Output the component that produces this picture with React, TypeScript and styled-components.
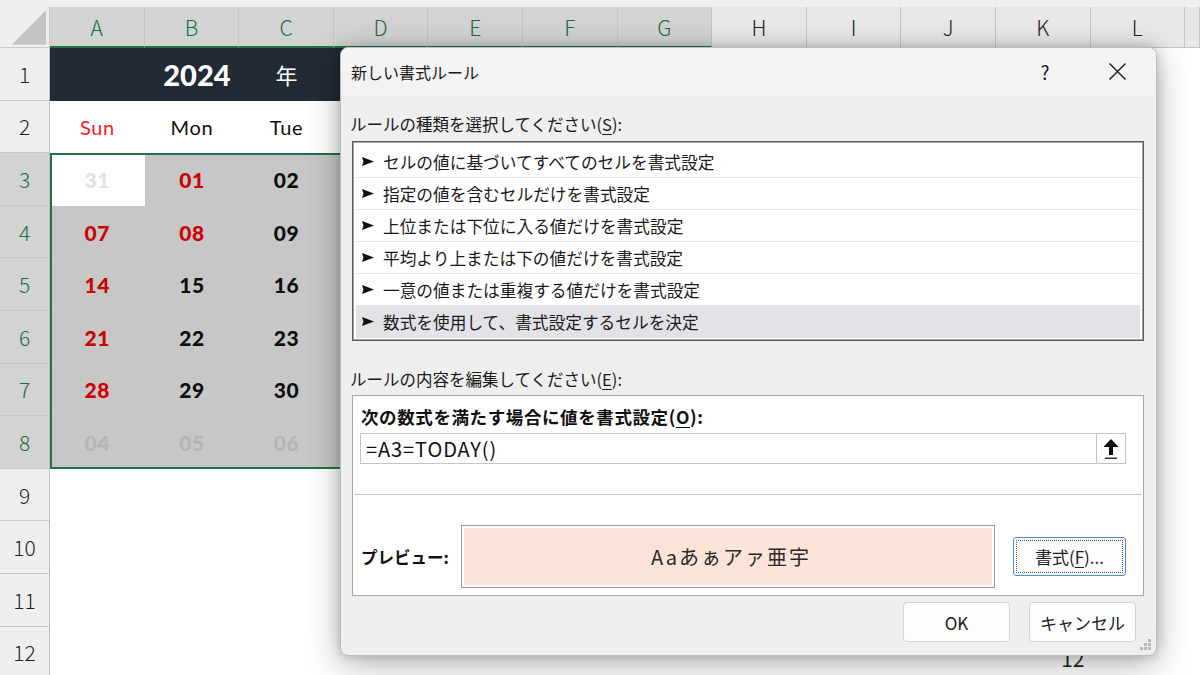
import React from "react";
import styled, { createGlobalStyle, css } from "styled-components";

const GlobalStyle = createGlobalStyle`
  html, body { margin: 0; padding: 0; }
  body {
    width: 1200px; height: 675px; overflow: hidden; background: #efefef;
    font-family: "Noto Sans CJK JP", "Noto Sans", sans-serif;
  }
  * { box-sizing: border-box; }
`;

const Screen = styled.div`
  position: relative;
  width: 1200px;
  height: 675px;
  overflow: hidden;
  background: #efefef;
  padding-top: 7px;
`;

const Sheet = styled.div`
  display: grid;
  grid-template-columns: 50px repeat(12, 94.6px) 1fr;
  grid-template-rows: 41px repeat(12, 52.6px);
  font-family: "Noto Sans CJK JP", sans-serif;
`;

type Pos = { $r: number; $c: number };
const place = css<Pos>`
  grid-row: ${(p) => p.$r};
  grid-column: ${(p) => p.$c};
`;

const Corner = styled.div<Pos>`
  ${place};
  background: #efefef;
  border-right: 1px solid #c8c8c8;
  border-bottom: 1px solid #c8c8c8;
  display: flex;
`;

const ColHead = styled.div<Pos & { $sel?: boolean }>`
  ${place};
  display: flex;
  align-items: center;
  justify-content: center;
  font-size: 21px;
  font-weight: 300;
  background: ${(p) => (p.$sel ? "#d3d3d3" : "#e8e8e8")};
  color: ${(p) => (p.$sel ? "#1c6b40" : "#1f1f1f")};
  border-right: 1px solid #c5c5c5;
  border-bottom: ${(p) => (p.$sel ? "2px solid #217346" : "1px solid #c5c5c5")};
`;

const RowHead = styled.div<Pos & { $sel?: boolean }>`
  ${place};
  display: flex;
  align-items: center;
  justify-content: center;
  font-size: 21px;
  font-weight: 300;
  background: ${(p) => (p.$sel ? "#d3d3d3" : "#efefef")};
  color: ${(p) => (p.$sel ? "#1c6b40" : "#1f1f1f")};
  border-right: 1px solid #c0c0c0;
  border-bottom: 1px solid #c6c6c6;
`;

type Fill = "plain" | "navy" | "sel" | "active";
const Cell = styled.div<Pos & { $fill: Fill; $align?: "center" | "end" }>`
  ${place};
  display: flex;
  align-items: center;
  justify-content: ${(p) => (p.$align === "end" ? "flex-end" : "center")};
  padding-right: ${(p) => (p.$align === "end" ? "6px" : "0")};
  padding-top: ${(p) => (p.$align === "end" ? "10px" : "0")};
  overflow: hidden;
  min-width: 0;
  background: ${(p) =>
    p.$fill === "navy" ? "#222a35" : p.$fill === "sel" ? "#c7c7c7" : "#ffffff"};
`;

const SelectionFrame = styled.div`
  grid-area: 4 / 2 / 10 / 9;
  border: 2px solid #217346;
  pointer-events: none;
  z-index: 1;
`;

const YearText = styled.span`
  font-family: "Lato", "Liberation Sans", sans-serif;
  font-weight: 900;
  font-size: 29px;
  color: #ffffff;
  padding-left: 10px;
`;

const YearUnit = styled.span`
  font-family: "Noto Sans CJK JP", sans-serif;
  font-size: 22px;
  color: #ffffff;
`;

type Tone = "red" | "sunred" | "black" | "dim" | "ghost";
const toneColor: Record<Tone, string> = {
  red: "#cc0000",
  sunred: "#ff1a1a",
  black: "#0d0d0d",
  dim: "#b4b4b4",
  ghost: "#e2e2e2",
};

const DayLabel = styled.span<{ $tone: Tone }>`
  font-family: "Lato", "Liberation Sans", sans-serif;
  font-size: 20px;
  letter-spacing: 0.6px;
  color: ${(p) => toneColor[p.$tone]};
`;

const DateNum = styled.span<{ $tone: Tone }>`
  font-family: "Lato", "Liberation Sans", sans-serif;
  font-weight: 900;
  font-size: 21px;
  letter-spacing: 0.5px;
  color: ${(p) => toneColor[p.$tone]};
`;

const PlainNum = styled.span`
  font-family: "Noto Sans CJK JP", sans-serif;
  font-size: 21px;
  color: #1f1f1f;
`;

/* ---------- Dialog ---------- */

const Dialog = styled.div`
  position: absolute;
  left: 340px;
  top: 47px;
  width: 817px;
  height: 609px;
  background: #efefef;
  border: 1px solid #bdbdbd;
  border-radius: 8px;
  box-shadow: 0 8px 34px rgba(0, 0, 0, 0.3), 0 0 12px rgba(0, 0, 0, 0.18);
  display: flex;
  flex-direction: column;
  overflow: hidden;
  z-index: 10;
  color: #1b1b1b;
  font-family: "Noto Sans CJK JP", "Noto Sans", sans-serif;
`;

const TitleBar = styled.div`
  height: 47px;
  flex: none;
  display: flex;
  align-items: center;
  background: #f3f3f3;
  padding-left: 10px;
`;

const Title = styled.div`
  flex: 1;
  font-size: 16px;
  color: #1a1a1a;
`;

const TitleButton = styled.div<{ $w: number }>`
  width: ${(p) => p.$w}px;
  height: 100%;
  display: flex;
  align-items: center;
  justify-content: center;
  font-size: 19px;
  color: #1a1a1a;
`;

const Body = styled.div`
  flex: 1;
  display: flex;
  flex-direction: column;
  padding: 0 12px 0 11px;
`;

const SectionLabel = styled.div<{ $mt: number }>`
  margin-top: ${(p) => p.$mt}px;
  margin-left: -2px;
  font-size: 16.5px;
  line-height: 24px;
  color: #1a1a1a;
`;

const Key = styled.span`
  text-decoration: underline;
  text-underline-offset: 3px;
`;

const RuleList = styled.div`
  margin-top: 5px;
  height: 200px;
  background: #ffffff;
  border: 1px solid #5c5c5c;
  box-shadow: inset 0 0 0 1px #a3a3a3;
  padding: 4px 3px 2px;
  display: flex;
  flex-direction: column;
`;

const RuleItem = styled.div<{ $sel?: boolean }>`
  height: 32px;
  flex: none;
  display: flex;
  align-items: center;
  gap: 9px;
  padding-left: 6px;
  font-size: 16.7px;
  color: #1a1a1a;
  background: ${(p) => (p.$sel ? "#e3e3e7" : "transparent")};
  border-bottom: 1px solid ${(p) => (p.$sel ? "#e3e3e7" : "#e8e8e8")};
`;

const EditPanel = styled.div`
  margin-top: 4px;
  background: #ffffff;
  border: 1px solid #a8a8a8;
  padding: 9px 17px 7px 7px;
  display: flex;
  flex-direction: column;
`;

const BoldLabel = styled.div`
  font-size: 17.5px;
  line-height: 24px;
  font-weight: 700;
  letter-spacing: 0.6px;
  color: #111;
  padding-left: 1px;
`;

const FormulaBox = styled.div`
  margin-top: 4px;
  height: 31px;
  border: 1px solid #c4c4c4;
  display: flex;
  align-items: stretch;
  background: #fff;
`;

const FormulaText = styled.div`
  flex: 1;
  display: flex;
  align-items: center;
  padding-left: 5px;
  font-size: 20px;
  letter-spacing: 0.9px;
  color: #111;
`;

const RefButton = styled.div`
  width: 30px;
  border: 1px solid #c2c2c2;
  border-radius: 2px;
  margin: -1px -1px -1px 0;
  display: flex;
  align-items: center;
  justify-content: center;
  background: #fff;
`;

const Divider = styled.div`
  margin: 30px -16px 0 -6px;
  height: 1px;
  background: #c6c6c6;
`;

const PreviewRow = styled.div`
  margin-top: 30px;
  display: flex;
  align-items: center;
`;

const PreviewLabel = styled.div`
  width: 101px;
  padding-left: 1px;
  font-size: 16.5px;
  font-weight: 700;
  color: #111;
`;

const PreviewBox = styled.div`
  width: 534px;
  height: 63px;
  border: 1px solid #9c9c9c;
  box-shadow: inset 0 0 0 2px #ffffff;
  background: #fde4d8;
  display: flex;
  align-items: center;
  justify-content: center;
  font-size: 20px;
  letter-spacing: 2px;
  color: #2a2a2a;
  padding-left: 6px;
`;

const Button = styled.div<{ $w: number; $focus?: boolean }>`
  width: ${(p) => p.$w}px;
  height: ${(p) => (p.$focus ? 39 : 40)}px;
  flex: none;
  display: flex;
  align-items: center;
  justify-content: center;
  background: #fdfdfd;
  border: 1px solid ${(p) => (p.$focus ? "#4b90dc" : "#d3d3d3")};
  border-radius: ${(p) => (p.$focus ? 3 : 4)}px;
  font-size: 17px;
  color: #1a1a1a;
  ${(p) =>
    p.$focus &&
    css`
      outline: 1px dotted #555;
      outline-offset: -4px;
    `}
`;

const FormatButton = styled(Button)`
  margin-left: 18px;
`;

const Footer = styled.div`
  margin-top: 6px;
  display: flex;
  justify-content: flex-end;
  gap: 19px;
  padding-right: 8px;
`;

const Grip = styled.svg`
  position: absolute;
  right: 4px;
  bottom: 4px;
`;

/* ---------- data ---------- */

const cols = ["A", "B", "C", "D", "E", "F", "G", "H", "I", "J", "K", "L", ""];
const days: [string, Tone][] = [
  ["Sun", "sunred"],
  ["Mon", "black"],
  ["Tue", "black"],
];

// visible part of the calendar (columns A–C); D–G lie under the dialog
const dates: [string, Tone][][] = [
  [["31", "ghost"], ["01", "red"], ["02", "black"]],
  [["07", "red"], ["08", "red"], ["09", "black"]],
  [["14", "red"], ["15", "black"], ["16", "black"]],
  [["21", "red"], ["22", "black"], ["23", "black"]],
  [["28", "red"], ["29", "black"], ["30", "black"]],
  [["04", "dim"], ["05", "dim"], ["06", "dim"]],
];

const rules = [
  "セルの値に基づいてすべてのセルを書式設定",
  "指定の値を含むセルだけを書式設定",
  "上位または下位に入る値だけを書式設定",
  "平均より上または下の値だけを書式設定",
  "一意の値または重複する値だけを書式設定",
  "数式を使用して、書式設定するセルを決定",
];

function renderCell(row: number, ci: number) {
  const r = row + 1;
  const c = ci + 2;
  const key = `c-${row}-${ci}`;
  if (row === 1) {
    if (ci < 7) {
      let content: React.ReactNode = null;
      if (ci === 1) content = <YearText>2024</YearText>;
      if (ci === 2) content = <YearUnit>年</YearUnit>;
      return (
        <Cell key={key} $r={r} $c={c} $fill="navy">
          {content}
        </Cell>
      );
    }
    return <Cell key={key} $r={r} $c={c} $fill="plain" />;
  }
  if (row === 2) {
    if (ci < 3) {
      const [label, tone] = days[ci];
      return (
        <Cell key={key} $r={r} $c={c} $fill="plain">
          <DayLabel $tone={tone}>{label}</DayLabel>
        </Cell>
      );
    }
    return <Cell key={key} $r={r} $c={c} $fill="plain" />;
  }
  if (row >= 3 && row <= 8 && ci < 7) {
    const active = row === 3 && ci === 0;
    if (ci < 3) {
      const [num, tone] = dates[row - 3][ci];
      return (
        <Cell key={key} $r={r} $c={c} $fill={active ? "active" : "sel"}>
          <DateNum $tone={tone}>{num}</DateNum>
        </Cell>
      );
    }
    return <Cell key={key} $r={r} $c={c} $fill="sel" />;
  }
  if (row === 12 && ci === 10) {
    return (
      <Cell key={key} $r={r} $c={c} $fill="plain" $align="end">
        <PlainNum>12</PlainNum>
      </Cell>
    );
  }
  return <Cell key={key} $r={r} $c={c} $fill="plain" />;
}

export default function App() {
  const rowsIdx = Array.from({ length: 12 }, (_, i) => i + 1);
  return (
    <Screen>
      <GlobalStyle />
      <Sheet>
        <Corner $r={1} $c={1}>
          <svg width="50" height="41" viewBox="0 0 50 41">
            <polygon points="12,38 47,3 47,38" fill="#c4c4c4" />
          </svg>
        </Corner>
        {cols.map((l, i) => (
          <ColHead key={`h${i}`} $r={1} $c={i + 2} $sel={i < 7}>
            {l}
          </ColHead>
        ))}
        {rowsIdx.map((n) => (
          <React.Fragment key={`r${n}`}>
            <RowHead $r={n + 1} $c={1} $sel={n >= 3 && n <= 8}>
              {n}
            </RowHead>
            {cols.map((_, ci) => renderCell(n, ci))}
          </React.Fragment>
        ))}
        <SelectionFrame />
      </Sheet>

      <Dialog>
        <TitleBar>
          <Title>新しい書式ルール</Title>
          <TitleButton $w={66}>?</TitleButton>
          <TitleButton $w={78}>
            <svg width="19" height="19" viewBox="0 0 19 19">
              <path d="M1.5 1.5 L17.5 17.5 M17.5 1.5 L1.5 17.5" stroke="#1a1a1a" strokeWidth="1.4" fill="none" />
            </svg>
          </TitleButton>
        </TitleBar>
        <Body>
          <SectionLabel $mt={17}>
            ルールの種類を選択してください(<Key>S</Key>):
          </SectionLabel>
          <RuleList>
            {rules.map((t, i) => (
              <RuleItem key={t} $sel={i === rules.length - 1}>
                <svg width="12" height="9" viewBox="0 0 12 9">
                  <path d="M0 0 L12 4.5 L0 9 L1.5 4.5 Z" fill="#111" />
                </svg>
                <span>{t}</span>
              </RuleItem>
            ))}
          </RuleList>
          <SectionLabel $mt={26}>
            ルールの内容を編集してください(<Key>E</Key>):
          </SectionLabel>
          <EditPanel>
            <BoldLabel>
              次の数式を満たす場合に値を書式設定(<Key>O</Key>):
            </BoldLabel>
            <FormulaBox>
              <FormulaText>=A3=TODAY()</FormulaText>
              <RefButton>
                <svg width="20" height="22" viewBox="0 0 20 22">
                  <path d="M10 1 L17.5 9 L12 9 L12 17 L8 17 L8 9 L2.5 9 Z" fill="#0a0a0a" />
                  <rect x="4" y="19.5" width="12" height="1.5" fill="#333" />
                </svg>
              </RefButton>
            </FormulaBox>
            <Divider />
            <PreviewRow>
              <PreviewLabel>プレビュー:</PreviewLabel>
              <PreviewBox>Aaあぁアァ亜宇</PreviewBox>
              <FormatButton $w={113} $focus>
                書式(<Key>F</Key>)...
              </FormatButton>
            </PreviewRow>
          </EditPanel>
          <Footer>
            <Button $w={107}>OK</Button>
            <Button $w={107}>キャンセル</Button>
          </Footer>
        </Body>
        <Grip width="14" height="14" viewBox="0 0 14 14">
          <rect x="10" y="2" width="3" height="3" fill="#b9b9b9" />
          <rect x="6" y="6" width="3" height="3" fill="#b9b9b9" />
          <rect x="10" y="6" width="3" height="3" fill="#b9b9b9" />
          <rect x="2" y="10" width="3" height="3" fill="#b9b9b9" />
          <rect x="6" y="10" width="3" height="3" fill="#b9b9b9" />
          <rect x="10" y="10" width="3" height="3" fill="#b9b9b9" />
        </Grip>
      </Dialog>
    </Screen>
  );
}
